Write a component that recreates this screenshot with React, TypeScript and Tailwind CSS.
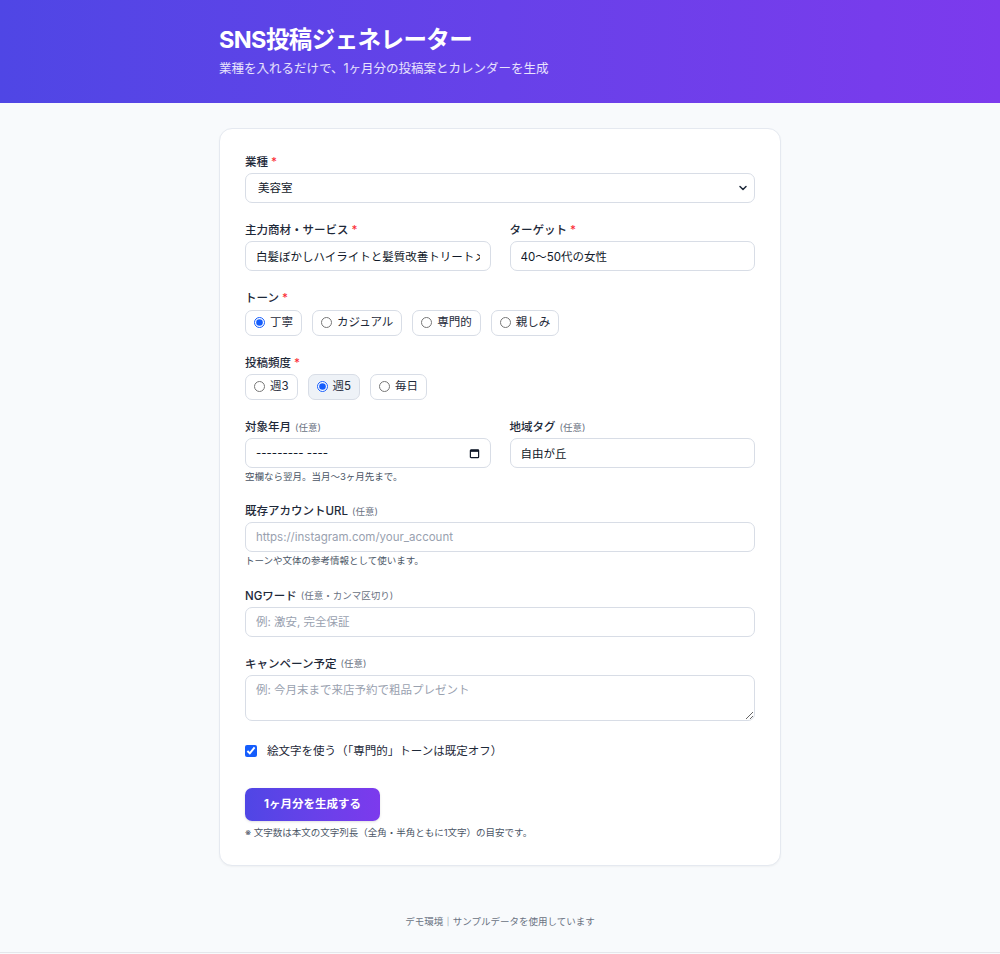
import { ChevronDown } from 'lucide-react';

const tones = ['丁寧', 'カジュアル', '専門的', '親しみ'];
const freqs = ['週3', '週5', '毎日'];

function Label({ text, required, optional }: { text: string; required?: boolean; optional?: string }) {
  return (
    <div className="mb-[2px] flex h-[17px] items-center text-[11.5px] font-medium text-gray-800">
      <span>{text}</span>
      {required && <span className="ml-[3px] text-red-500">*</span>}
      {optional && <span className="ml-[4px] text-[9.5px] font-normal text-gray-500">{optional}</span>}
    </div>
  );
}

function Hint({ children, gap = 'mt-[2px]' }: { children: React.ReactNode; gap?: string }) {
  return <p className={gap + ' flex h-[14px] items-center text-[9.5px] text-gray-600'}>{children}</p>;
}

const inputCls =
  'block w-full h-[30px] rounded-[7px] border border-[#d8dde6] bg-white px-[10px] text-[11.5px] leading-[16px] text-gray-900 placeholder:text-gray-400 outline-none';

function Pill({ name, label, checked, hover }: { name: string; label: string; checked?: boolean; hover?: boolean }) {
  return (
    <label
      className={
        'flex h-[26px] items-center gap-[5px] rounded-[7px] border border-[#d8dde6] px-[8px] text-[11.5px] text-gray-800 ' +
        (hover ? 'bg-[#eef2f7]' : 'bg-white')
      }
    >
      <input type="radio" name={name} defaultChecked={checked} className="h-[11px] w-[11px] accent-blue-600" />
      <span>{label}</span>
    </label>
  );
}

export default function App() {
  return (
    <div
      className="min-h-[954px] bg-[#f8fafc] text-gray-900"
      style={{ fontFamily: 'Inter, "Noto Sans CJK JP", sans-serif' }}
    >
      {/* Header */}
      <header className="bg-linear-to-r from-[#4f46e5] to-[#7c3aed] pt-[24px] pb-[25px]">
        <div className="mx-auto w-[562px]">
          <h1 className="h-[32px] text-[23.5px] leading-[32px] font-bold tracking-tight text-white">SNS投稿ジェネレーター</h1>
          <p className="mt-[4px] h-[18px] text-[12.5px] leading-[18px] text-white/85">
            業種を入れるだけで、1ヶ月分の投稿案とカレンダーを生成
          </p>
        </div>
      </header>

      {/* Form card */}
      <main className="pt-[25px]">
        <div className="mx-auto w-[562px] rounded-[13px] border border-[#e5e9f0] bg-white px-[25px] pt-[25px] pb-[25px] shadow-[0_1px_2px_rgba(0,0,0,0.04)]">
          <div className="flex flex-col gap-[19.3px]">
            <div>
              <Label text="業種" required />
              <div className="relative">
                <select className={inputCls + ' h-[29px] appearance-none pl-[12px]'} defaultValue="美容室">
                  <option>美容室</option>
                  <option>飲食店</option>
                  <option>整体院</option>
                </select>
                <ChevronDown
                  size={12}
                  strokeWidth={3}
                  className="pointer-events-none absolute top-[9px] right-[6px] text-gray-800"
                />
              </div>
            </div>

            <div className="grid grid-cols-2 gap-x-[19px]">
              <div>
                <Label text="主力商材・サービス" required />
                <input className={inputCls} defaultValue="白髪ぼかしハイライトと髪質改善トリートメント" />
              </div>
              <div>
                <Label text="ターゲット" required />
                <input className={inputCls} defaultValue="40〜50代の女性" />
              </div>
            </div>

            <div>
              <Label text="トーン" required />
              <div className="mt-[2px] flex gap-[10px]">
                {tones.map((t, i) => (
                  <Pill key={t} name="tone" label={t} checked={i === 0} />
                ))}
              </div>
            </div>

            <div>
              <Label text="投稿頻度" required />
              <div className="mt-[2px] flex gap-[10px]">
                {freqs.map((f, i) => (
                  <Pill key={f} name="freq" label={f} checked={i === 1} hover={i === 1} />
                ))}
              </div>
            </div>

            <div className="grid grid-cols-2 gap-x-[19px]">
              <div>
                <Label text="対象年月" optional="(任意)" />
                <div className="relative">
                  <input className={inputCls} readOnly value="--------- ----" />
                  <svg
                    viewBox="0 0 12 12"
                    className="pointer-events-none absolute top-[10px] right-[11px] h-[11px] w-[11px] text-gray-900"
                    fill="none"
                    stroke="currentColor"
                  >
                    <rect x="1.5" y="2" width="9" height="8.5" rx="0.8" strokeWidth="1.3" />
                    <rect x="1.5" y="2" width="9" height="2.2" fill="currentColor" stroke="none" />
                  </svg>
                </div>
                <Hint>空欄なら翌月。当月～3ヶ月先まで。</Hint>
              </div>
              <div>
                <Label text="地域タグ" optional="(任意)" />
                <input className={inputCls} defaultValue="自由が丘" />
              </div>
            </div>

            <div>
              <Label text="既存アカウントURL" optional="(任意)" />
              <input className={inputCls} placeholder="https://instagram.com/your_account" />
              <Hint>トーンや文体の参考情報として使います。</Hint>
            </div>

            <div>
              <Label text="NGワード" optional="(任意・カンマ区切り)" />
              <input className={inputCls} placeholder="例: 激安, 完全保証" />
            </div>

            <div>
              <Label text="キャンペーン予定" optional="(任意)" />
              <textarea
                className={inputCls + ' h-[46px] py-[6px] leading-[17px]'}
                placeholder="例: 今月末まで来店予約で粗品プレゼント"
              />
            </div>

            <label className="flex h-[22px] items-center gap-[10px] text-[11.5px] text-gray-800">
              <input type="checkbox" defaultChecked className="h-[12px] w-[12px] accent-blue-600" />
              <span>絵文字を使う（「専門的」トーンは既定オフ）</span>
            </label>
          </div>

          <div className="mt-[26px]">
            <button className="block h-[33px] rounded-[7px] bg-linear-to-r from-[#4f46e5] to-[#7c3aed] px-[19px] text-[11.5px] font-bold text-white shadow-sm">
              1ヶ月分を生成する
            </button>
            <Hint gap="mt-[5px]">※ 文字数は本文の文字列長（全角・半角ともに1文字）の目安です。</Hint>
          </div>
        </div>
      </main>

      {/* Footer */}
      <footer className="mt-[48px] flex h-[16px] items-center justify-center text-[9.5px] text-gray-500">
        デモ環境｜サンプルデータを使用しています
      </footer>
      <div className="mt-[22px] border-b border-gray-200" />
    </div>
  );
}
